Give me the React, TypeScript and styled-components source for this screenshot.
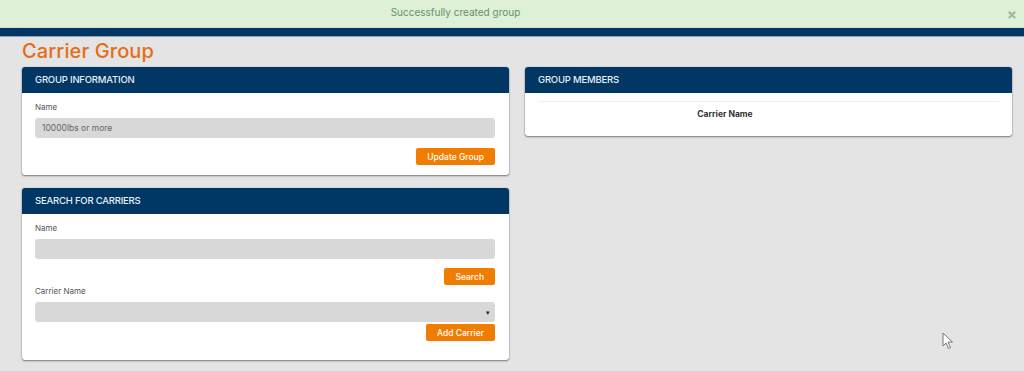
import styled, { createGlobalStyle } from "styled-components";

const GlobalStyle = createGlobalStyle`
  * { box-sizing: border-box; }
  body {
    margin: 0;
    background: #e4e4e4;
    font-family: Inter, "Noto Sans", sans-serif;
    color: #333;
  }
`;

const App = () => {
  return (
    <>
      <GlobalStyle />
      <Page>
        <Alert>
          <AlertText>Successfully created group</AlertText>
          <CloseButton>×</CloseButton>
        </Alert>
        <NavBar />
        <Content>
          <PageTitle>Carrier Group</PageTitle>
          <Columns>
            <Column>
              <Panel>
                <PanelHeader>GROUP INFORMATION</PanelHeader>
                <PanelBody>
                  <Label>Name</Label>
                  <Field value="10000lbs or more" readOnly />
                  <Actions $top={10}>
                    <OrangeButton>Update Group</OrangeButton>
                  </Actions>
                </PanelBody>
              </Panel>
              <Panel>
                <PanelHeader>SEARCH FOR CARRIERS</PanelHeader>
                <PanelBody $bottom={19}>
                  <Label>Name</Label>
                  <Field />
                  <Actions $top={9}>
                    <OrangeButton>Search</OrangeButton>
                  </Actions>
                  <Label $top={1}>Carrier Name</Label>
                  <SelectBox>
                    <Caret>▾</Caret>
                  </SelectBox>
                  <Actions $top={2}>
                    <OrangeButton>Add Carrier</OrangeButton>
                  </Actions>
                </PanelBody>
              </Panel>
            </Column>
            <Column>
              <Panel>
                <PanelHeader>GROUP MEMBERS</PanelHeader>
                <MembersBody>
                  <MembersTable>
                    <thead>
                      <tr>
                        <HeadCell>Carrier Name</HeadCell>
                        <HeadCell $width={88} />
                      </tr>
                    </thead>
                  </MembersTable>
                </MembersBody>
              </Panel>
            </Column>
          </Columns>
        </Content>
        <Cursor width="12" height="18" viewBox="0 0 12 18">
          <path d="M1 1 L1 14 L4 11 L6.5 16.5 L8.5 15.5 L6 10 L10.5 10 Z" fill="#fff" stroke="#777" strokeWidth="1" strokeLinejoin="round" />
        </Cursor>
      </Page>
    </>
  );
};

export default App;

const Page = styled.div`
  position: relative;
  width: 1024px;
  height: 371px;
  overflow: hidden;
`;

const Alert = styled.div`
  position: relative;
  display: flex;
  align-items: center;
  justify-content: center;
  height: 28px;
  background: #dff0d8;
  border-bottom: 1px solid #cfe3c4;
`;

const AlertText = styled.span`
  font-size: 10px;
  color: #6a8f6a;
  margin-left: -113px;
  margin-top: -4px;
`;

const CloseButton = styled.span`
  position: absolute;
  right: 7px;
  top: 5px;
  font-size: 15px;
  font-weight: 700;
  color: #9cb99a;
`;

const NavBar = styled.div`
  height: 9px;
  background: #003764;
  border-bottom: 1px solid #8fa0b3;
`;

const Content = styled.div`
  padding: 0 13px 0 22px;
`;

const PageTitle = styled.h1`
  margin: 1px 0 0;
  font-size: 20px;
  line-height: 26px;
  font-weight: 500;
  color: #e46d17;
  letter-spacing: 0.1px;
`;

const Columns = styled.div`
  display: grid;
  grid-template-columns: 487px 487px;
  gap: 16px;
  margin-top: 3px;
`;

const Column = styled.div`
  display: flex;
  flex-direction: column;
  gap: 13px;
`;

const Panel = styled.section`
  background: #fff;
  border-radius: 3px;
  box-shadow: 0 1px 2px rgba(0, 0, 0, 0.45), 0 0 1px rgba(0, 0, 0, 0.4);
  overflow: hidden;
`;

const PanelHeader = styled.div`
  height: 26px;
  line-height: 26px;
  padding-left: 13px;
  background: #003764;
  color: #e8eef4;
  font-size: 9.5px;
  font-weight: 500;
  letter-spacing: -0.2px;
`;

const PanelBody = styled.div<{ $bottom?: number }>`
  display: flex;
  flex-direction: column;
  padding: 9px 14px ${({ $bottom }) => $bottom ?? 10}px 13px;
`;

const Label = styled.label<{ $top?: number }>`
  font-size: 8px;
  line-height: 10px;
  color: #555;
  margin-top: ${({ $top }) => $top ?? 0}px;
  margin-bottom: 6px;
`;

const Field = styled.input`
  width: 100%;
  height: 20px;
  border: none;
  border-radius: 3px;
  background: #d8d8d8;
  padding: 0 7px;
  font-family: inherit;
  font-size: 8.5px;
  color: #666;
  outline: none;
`;

const SelectBox = styled.div`
  display: flex;
  align-items: center;
  justify-content: flex-end;
  height: 20px;
  border-radius: 3px;
  background: #d8d8d8;
  padding-right: 5px;
`;

const Caret = styled.span`
  font-size: 7px;
  color: #222;
`;

const Actions = styled.div<{ $top: number }>`
  display: flex;
  justify-content: flex-end;
  margin-top: ${({ $top }) => $top}px;
`;

const OrangeButton = styled.button`
  height: 17px;
  padding: 0 11px;
  border: none;
  border-radius: 2px;
  background: #f17d00;
  color: #fff;
  font-family: inherit;
  font-size: 8.5px;
  font-weight: 500;
`;

const MembersBody = styled.div`
  padding: 8px 13px 14px 14px;
`;

const MembersTable = styled.table`
  width: 100%;
  border-collapse: collapse;
  border-top: 1px solid #eee;
`;

const HeadCell = styled.th<{ $width?: number }>`
  width: ${({ $width }) => ($width ? `${$width}px` : "auto")};
  padding: 7px 0 3px;
  font-size: 8.5px;
  font-weight: 700;
  color: #333;
  text-align: center;
`;

const Cursor = styled.svg`
  position: absolute;
  left: 942px;
  top: 332px;
`;
